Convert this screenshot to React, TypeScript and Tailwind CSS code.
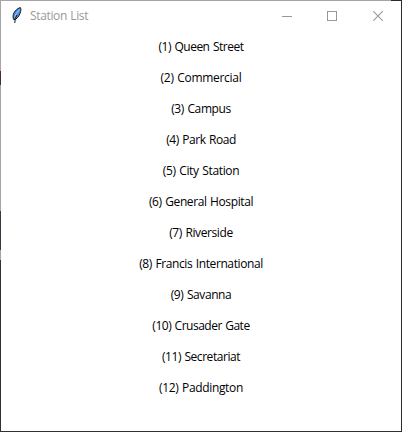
import React from "react";

const stations: { name: string; fit: string }[] = [
  { name: "Queen Street", fit: "tracking-[-0.5px]" },
  { name: "Commercial", fit: "tracking-[-0.3px]" },
  { name: "Campus", fit: "tracking-[-0.4px]" },
  { name: "Park Road", fit: "tracking-[-0.45px]" },
  { name: "City Station", fit: "tracking-[-0.35px]" },
  { name: "General Hospital", fit: "tracking-[-0.4px]" },
  { name: "Riverside", fit: "tracking-[-0.4px]" },
  { name: "Francis International", fit: "tracking-[-0.4px]" },
  { name: "Savanna", fit: "tracking-[-0.42px]" },
  { name: "Crusader Gate", fit: "tracking-[-0.5px]" },
  { name: "Secretariat", fit: "tracking-[-0.45px]" },
  { name: "Paddington", fit: "tracking-[-0.35px]" },
];

function Feather() {
  return (
    <svg width="10" height="17" viewBox="0 0 10 17" className="shrink-0">
      <path d="M8.3 .6C5.5 1.2 2.4 4.2 1.4 7.2C.8 9.2 1 11 1.7 12.6L3.6 12.2C6 10.8 7.8 7.8 8.6 4.6C9 3 9 1.6 8.3 .6Z" fill="#4f91e0" stroke="#101418" strokeWidth="1" />
      <path d="M7.2 2.4C5 5 3.2 8 2.7 11" fill="none" stroke="#7fb6f5" strokeWidth="1.4" />
      <path d="M5 8L3.2 11.5L2.8 16" fill="none" stroke="#101418" strokeWidth="1" />
    </svg>
  );
}

function TitleBar() {
  return (
    <header className="flex h-[29px] shrink-0 items-center text-[#999999]">
      <div className="flex flex-1 items-center pl-[11px]">
        <Feather />
        <h1 className="ml-2 text-[12px] leading-4 tracking-[-0.35px] [word-spacing:0.5px] whitespace-nowrap">Station List</h1>
      </div>
      <div className="flex w-[137px] shrink-0">
        <button aria-label="Minimize" className="flex w-[45px] justify-center pl-px">
          <svg width="10" height="10" viewBox="0 0 10 10" shapeRendering="crispEdges"><path d="M0 5.5H10" stroke="currentColor" /></svg>
        </button>
        <button aria-label="Maximize" className="flex w-[46px] justify-center">
          <svg width="10" height="10" viewBox="0 0 10 10" shapeRendering="crispEdges"><path d="M.5 .5H9.5V9.5H.5Z" fill="none" stroke="currentColor" /></svg>
        </button>
        <button aria-label="Close" className="flex w-[46px] justify-center">
          <svg width="10" height="10" viewBox="0 0 10 10"><path d="M.2 .2L9.8 9.8M9.8 .2L.2 9.8" stroke="currentColor" strokeWidth="1.1" /></svg>
        </button>
      </div>
    </header>
  );
}

export default function App() {
  return (
    <div className="flex h-[432px] w-[402px] bg-white font-['Open_Sans','Noto_Sans',sans-serif]">
      <div className="flex w-px shrink-0 flex-col">
        <div className="h-[71px] bg-[#a5a5a5]" />
        <div className="h-[14px] bg-[#4c2a32]" />
        <div className="h-[126px] bg-[#a5a5a5]" />
        <div className="h-[39px] bg-[#343b45]" />
        <div className="h-[10px] bg-[#a5a5a5]" />
        <div className="flex-1 bg-[#323037]" />
      </div>
      <div className="flex min-w-0 flex-1 flex-col">
        <div className="flex h-px shrink-0">
          <div className="w-[390px] bg-[#a5a5a5]" />
          <div className="flex-1 bg-[#2b2b2b]" />
        </div>
        <TitleBar />
        <ol className="flex flex-1 flex-col items-center pt-[1px] text-[12px] leading-[31px] text-black [word-spacing:0.8px]">
          {stations.map(({ name, fit }, i) => (
            <li key={name} className={`h-[31px] whitespace-nowrap ${fit}`}>({i + 1}) {name}</li>
          ))}
        </ol>
        <div className="h-px shrink-0 bg-[#323037]" />
      </div>
      <div className="w-px shrink-0 bg-[#2b2b2d]" />
    </div>
  );
}
